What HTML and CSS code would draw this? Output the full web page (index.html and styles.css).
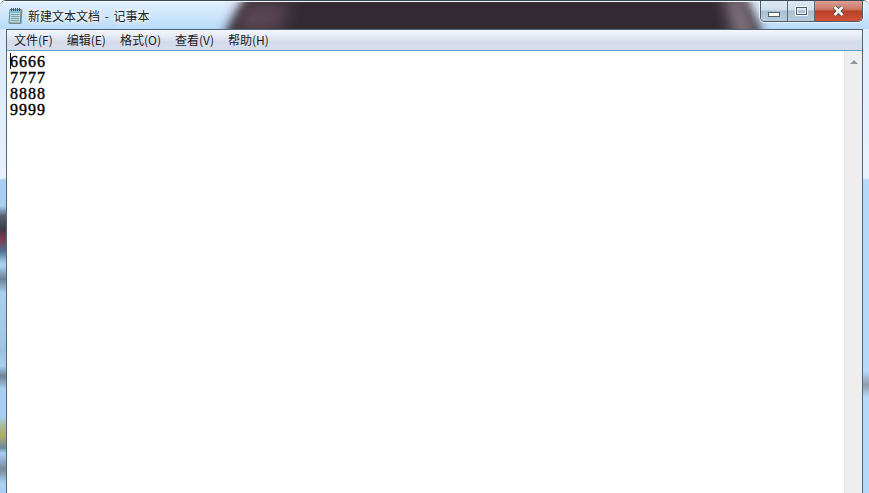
FILE: index.html
```html
<!DOCTYPE html>
<html lang="zh-CN">
<head>
<meta charset="utf-8">
<title>新建文本文档 - 记事本</title>
<link rel="stylesheet" href="styles.css">
</head>
<body>
<div class="window">
  <header class="titlebar">
    <svg class="backdrop" width="869" height="28" viewBox="0 0 869 28">
      <defs>
        <filter id="soft" x="-10%" y="-100%" width="120%" height="300%"><feGaussianBlur stdDeviation="5"/></filter>
        <filter id="softer" x="-100%" y="-100%" width="300%" height="300%"><feGaussianBlur stdDeviation="8"/></filter>
      </defs>
      <path d="M248 -8L222 36H764L744 -8z" fill="#332a32" filter="url(#soft)"/>
      <path d="M245 0L232 30H280L290 0z" fill="#5a4752" filter="url(#softer)"/>
      <path d="M724 -8L736 36H758L740 -8z" fill="#8f7f8a" filter="url(#softer)"/>
    </svg>
    <svg class="app-icon" width="17" height="18" viewBox="0 0 17 18">
      <path d="M3.500 2.500h12l-1 14.500h-12z" fill="#a98f62"/>
      <path d="M3 2.500h11l-.5 13.500H2z" fill="#bcdcdf" stroke="#5f8794"/>
      <path d="M3.500 3h10l-.2 3H3.300z" fill="#7fbccd"/>
      <path d="M4.500 1v3M6.500 1v3M8.500 1v3M10.500 1v3M12.500 1v3" stroke="#3f5a66"/>
      <path d="M4 7.500h8.500M4 9.500h8.500M3.800 11.500h8.600M3.800 13.500h8.600" stroke="#7ca3ad"/>
    </svg>
    <span class="title">新建文本文档 - 记事本</span>
    <div class="controls">
      <button class="ctl ctl-min" aria-label="最小化"><span class="min-glyph"></span></button>
      <button class="ctl ctl-max" aria-label="最大化"><span class="max-glyph"></span></button>
      <button class="ctl ctl-close" aria-label="关闭">
        <svg width="15" height="12" viewBox="0 0 15 12"><path d="M3.500 2l8 8M11.500 2l-8 8" stroke="#4a4f58" stroke-width="4.400"/><path d="M3.500 2l8 8M11.500 2l-8 8" stroke="#f4f4f4" stroke-width="2.600"/></svg>
      </button>
    </div>
  </header>
  <div class="client">
    <nav class="menubar">
      <span class="menu-item">文件(F)</span>
      <span class="menu-item">编辑(E)</span>
      <span class="menu-item">格式(O)</span>
      <span class="menu-item">查看(V)</span>
      <span class="menu-item">帮助(H)</span>
    </nav>
    <div class="editor">
      <div class="content">
        <span class="caret"></span>
        <div class="line">6666</div>
        <div class="line">7777</div>
        <div class="line">8888</div>
        <div class="line">9999</div>
      </div>
      <div class="scrollbar"><span class="arrow-up"></span></div>
    </div>
  </div>
</div>
</body>
</html>
```
FILE: styles.css
```css
html, body {
  margin: 0;
  height: 100%;
  overflow: hidden;
  background: #fff;
}
.window {
  height: 100vh;
  box-sizing: border-box;
  display: flex;
  flex-direction: column;
  overflow: hidden;
  border-radius: 6px 6px 0 0;
  border-top: 1px solid #3c4a58;
  background:
    linear-gradient(180deg,
      #d9e9fa 0, #e8f1fc 177px, #a9cff2 179px, #a9cff2 205px, #55606e 215px,
      #3c3c46 228px, #7a3c50 238px, #4f6f90 250px, #a9cff2 262px, #a9cff2 265px,
      #6f8296 278px, #a9cff2 292px, #a5c6e6 340px, #9ebfe0 350px, #a9cff2 365px,
      #6f8296 375px, #a9cff2 388px, #a9cff2 415px, #a8b888 428px, #b0b060 435px,
      #6f8aa0 447px, #a9cff2 452px, #78889a 468px, #a9cff2 482px) 0 0 / 6px 100% no-repeat,
    linear-gradient(180deg,
      #dcecfc 0, #e8f2fe 177px, #b6d9fb 179px, #b6d9fb 370px, #8f9cac 384px,
      #b6d9fb 396px, #b6d9fb 100%) 100% 0 / 6px 100% no-repeat,
    #b9dbfa;
  font-family: "Noto Sans CJK SC", "Liberation Sans", sans-serif;
}
.titlebar {
  position: relative;
  height: 28px;
  flex: none;
  display: flex;
  align-items: center;
  padding-left: 7px;
  box-sizing: border-box;
  border-top: 1px solid #f2f8fe;
  background: linear-gradient(180deg, #e0effd, #b9dbfa);
}
.backdrop {
  position: absolute;
  left: 0;
  top: 0;
}
.app-icon {
  position: relative;
  flex: none;
  margin-top: 1px;
}
.title {
  position: relative;
  margin-left: 4px;
  font-size: 12px;
  word-spacing: 2px;
  color: #222;
  text-shadow: 0 0 4px #fff, 0 0 6px #fff;
}
.controls {
  position: absolute;
  top: -1px;
  right: 6px;
  display: flex;
  height: 20px;
  border: 1px solid #4d5a68;
  border-top: 0;
  border-radius: 0 0 5px 5px;
  overflow: hidden;
  box-shadow: 0 0 0 1px rgba(255,255,255,.6);
}
.ctl {
  padding: 0;
  border: 0;
  display: flex;
  align-items: center;
  justify-content: center;
}
.ctl-min, .ctl-max {
  width: 27px;
  background: linear-gradient(180deg, #dce9f4 0, #cfdfec 45%, #a9bfd2 50%, #b8ccdd 100%);
  border-right: 1px solid #5d6b78;
}
.ctl-close {
  width: 47px;
  background: linear-gradient(180deg, #dba192 0, #cf7a68 40%, #b93f27 52%, #d2543a 100%);
}
.min-glyph {
  display: block;
  width: 10px;
  height: 3px;
  margin-top: 6px;
  background: #fff;
  border: 1px solid #4f5f6e;
}
.max-glyph {
  display: block;
  width: 9px;
  height: 6px;
  border: 1px solid #4f5f6e;
  outline: 1px solid #e8f0f6;
  outline-offset: -2px;
  box-shadow: 0 0 0 1px #f4f8fb;
}
.client {
  flex: 1;
  min-height: 0;
  margin: 0 6px;
  display: flex;
  flex-direction: column;
  border: 1px solid #4f6478;
  border-bottom: 0;
  border-radius: 1px 1px 0 0;
  background: #fff;
  position: relative;
}
.menubar {
  height: 21px;
  flex: none;
  box-sizing: border-box;
  display: flex;
  align-items: center;
  padding: 0 0 2px 7px;
  gap: 14px;
  background: linear-gradient(180deg, #f4f6fb 0, #e6ebf5 30%, #d3daea 60%, #d7ddec 100%);
  border-bottom: 1px solid #5f9fc4;
}
.menu-item {
  font-size: 12px;
  color: #1c1c1c;
}
.editor {
  flex: 1;
  min-height: 0;
  display: flex;
}
.content {
  position: relative;
  flex: 1;
  padding: 3px 0 0 3px;
  font-family: "Liberation Serif", serif;
  font-size: 16px;
  letter-spacing: 1px;
  line-height: 16px;
  -webkit-text-stroke: 0.4px #000;
  color: #000;
}
.line {
  height: 16px;
  overflow: hidden;
}
.caret {
  position: absolute;
  left: 3px;
  top: 2px;
  width: 1px;
  height: 16px;
  background: #000;
}
.scrollbar {
  flex: none;
  width: 18px;
  box-sizing: border-box;
  display: flex;
  justify-content: center;
  padding-top: 9px;
  background: #eeeeee;
  border-left: 1px solid #e4e4e4;
}
.arrow-up {
  width: 0;
  height: 0;
  border-left: 4px solid transparent;
  border-right: 4px solid transparent;
  border-bottom: 4px solid #8a9aa5;
}
```
